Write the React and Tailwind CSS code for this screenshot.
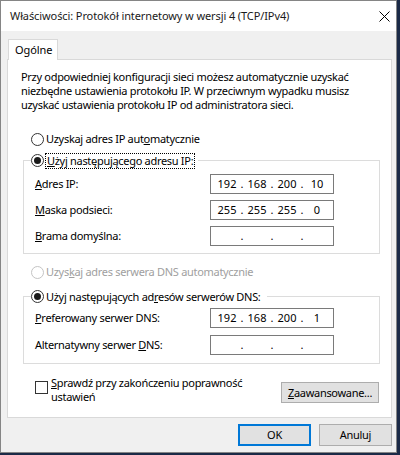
import { Fragment } from "react";

function Radio({ checked, disabled }) {
  return (
    <span className={`w-[13px] h-[13px] rounded-full border ${disabled ? "border-[#c4c4c4]" : "border-[#333333]"} bg-white flex items-center justify-center shrink-0`}>
      {checked && <span className="w-[7px] h-[7px] rounded-full bg-[#1a1a1a]" />}
    </span>
  );
}

function IpBox({ parts }) {
  return (
    <div className="w-[124px] h-[20px] border border-[#7a7a7a] bg-white flex items-center pl-[3px] tracking-normal">
      {parts.map((p, i) => (
        <Fragment key={i}>
          <span className="w-[26px] text-center">{p}</span>
          {i < 3 && <span className="w-[4px] text-center">.</span>}
        </Fragment>
      ))}
    </div>
  );
}

function Row({ label, parts, className }) {
  return (
    <div className={`flex items-center h-[20px] pl-[11px] ${className}`}>
      <span className="w-[175px]">{label}</span>
      <IpBox parts={parts} />
    </div>
  );
}

export default function App() {
  return (
    <div className="w-[400px] h-[455px] bg-[#1b2a47] font-['Noto_Sans',sans-serif] text-[11px] tracking-[-0.3px] leading-[16px] text-black whitespace-nowrap">
      <div className="w-[397px] h-[453px] border border-[#858585] bg-[#f0f0f0] flex flex-col">
        <div className="h-[30px] bg-white flex items-center justify-between pl-[9px] pr-[6px] shrink-0 text-[#1a1a1a] tracking-[-0.1px]">
          <span>Właściwości: Protokół internetowy w wersji 4 (TCP/IPv4)</span>
          <svg width="11" height="11" viewBox="0 0 11 11">
            <path d="M0.5 0.5 L10.5 10.5 M10.5 0.5 L0.5 10.5" stroke="#000" strokeWidth="1" />
          </svg>
        </div>

        <div className="pt-[8px] pl-[6px] pr-[4px]">
          <div className="relative z-10 -mb-px ml-[1px] w-[50px] h-[21px] bg-white border-l border-t border-r border-[#d9d9d9] flex items-center pl-[6px] pb-[1px] tracking-[-0.1px]">
            Ogólne
          </div>
          <div className="h-[359px] border border-[#d9d9d9] bg-white flex flex-col">
            <p className="mt-[10px] ml-[13px] leading-[14px]">
              Przy odpowiedniej konfiguracji sieci możesz automatycznie uzyskać
              <br />
              niezbędne ustawienia protokołu IP. W przeciwnym wypadku musisz
              <br />
              uzyskać ustawienia protokołu IP od administratora sieci.
            </p>

            <div className="mt-[19px] ml-[23px] h-[16px] flex items-center gap-[2px]">
              <Radio />
              <span>
                Uzyskaj adres IP aut<u>o</u>matycznie
              </span>
            </div>

            <div className="mt-[13px] ml-[15px] mr-[11px] border border-[#dcdcdc] pb-[7px]">
              <div className="-mt-[9px] ml-[7px] w-fit h-[17px] bg-white flex items-center gap-[2px] pr-[4px]">
                <Radio checked />
                <span className="outline outline-1 outline-dotted outline-black px-[1px] leading-[14px]">
                  <u>U</u>żyj następującego adresu IP:
                </span>
              </div>
              <Row className="mt-[5px]" label={<><u>A</u>dres IP:</>} parts={["192", "168", "200", "10"]} />
              <Row className="mt-[6px]" label={<><u>M</u>aska podsieci:</>} parts={["255", "255", "255", "0"]} />
              <Row className="mt-[6px]" label={<><u>B</u>rama domyślna:</>} parts={["", "", "", ""]} />
            </div>

            <div className="mt-[10px] ml-[23px] h-[16px] flex items-center gap-[2px] text-[#a0a0a0]">
              <Radio disabled />
              <span>
                Uzys<u>k</u>aj adres serwera DNS automatycznie
              </span>
            </div>

            <div className="mt-[16px] ml-[15px] mr-[11px] border border-[#dcdcdc] pb-[8px]">
              <div className="-mt-[9px] ml-[7px] w-fit h-[17px] bg-white flex items-center gap-[2px] pr-[6px]">
                <Radio checked />
                <span>
                  Użyj następujących ad<u>r</u>esów serwerów DNS:
                </span>
              </div>
              <Row className="mt-[3px]" label={<><u>P</u>referowany serwer DNS:</>} parts={["192", "168", "200", "1"]} />
              <Row className="mt-[7px]" label={<>Alternatywny serwer <u>D</u>NS:</>} parts={["", "", "", ""]} />
            </div>

            <div className="mt-[12px] ml-[27px] mr-[12px] flex items-start">
              <span className="mt-[5px] w-[13px] h-[13px] border border-[#333333] bg-white shrink-0" />
              <span className="ml-[3px] leading-[13.5px]">
                <u>S</u>prawdź przy zakończeniu poprawność
                <br />
                ustawień
              </span>
              <button className="ml-auto mt-[6px] w-[98px] h-[21px] bg-[#e1e1e1] border border-[#adadad] text-center">
                <u>Z</u>aawansowane...
              </button>
            </div>
          </div>
        </div>

        <div className="mt-[6px] pr-[4px] flex justify-end gap-[8px]">
          <button className="w-[73px] h-[22px] bg-[#e1e1e1] border-2 border-[#0078d7]">OK</button>
          <button className="w-[73px] h-[22px] bg-[#e1e1e1] border border-[#adadad]">Anuluj</button>
        </div>
      </div>
    </div>
  );
}
